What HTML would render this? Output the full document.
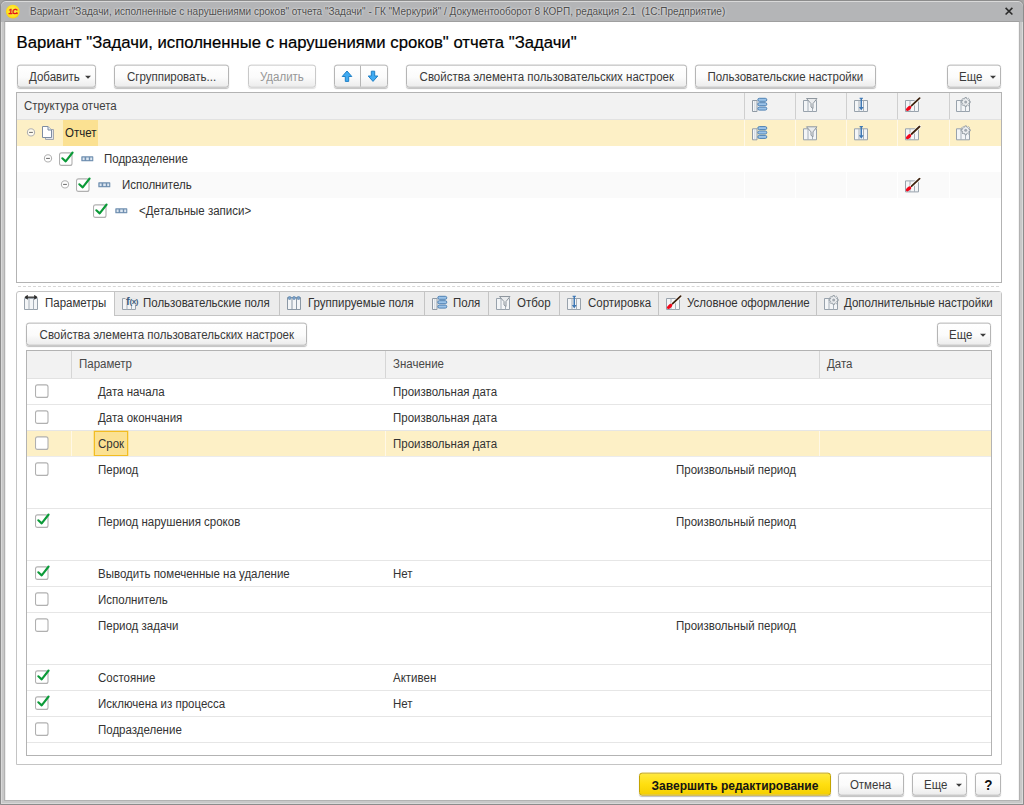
<!DOCTYPE html>
<html lang="ru"><head><meta charset="utf-8">
<title>Вариант отчета</title>
<style>
*{box-sizing:border-box;margin:0;padding:0}
html,body{width:1024px;height:805px;overflow:hidden;background:#a4a4a4}
body{font-family:"Liberation Sans",Arial,sans-serif;font-size:12px;color:#333;position:relative}
.abs{position:absolute}
#frame{position:absolute;left:0;top:0;width:1024px;height:805px;background:#c8c8c8;border:1px solid #8c8c8c;border-radius:6px 6px 0 0;box-shadow:inset 0 0 0 1px #d9d9d9}
#tbar{position:absolute;left:1px;top:2px;width:1022px;height:20px;background:#b4b5b7;border-radius:5px 5px 0 0}
#client{position:absolute;left:4px;top:21px;width:1016px;height:780px;background:#fff;border:1px solid #b2b2b2;border-top-color:#9f9f9f;box-shadow:inset 1px 0 0 #ededed,inset -1px 0 0 #f4f4f4}
#ttl{position:absolute;left:30px;top:0;height:20px;line-height:20px;font-size:11.8px;color:#4e4e4e;white-space:nowrap;transform:translateY(.7px) scaleX(.8476);transform-origin:0 50%;text-shadow:0 0 3px #e6e6e6,0 0 2px #ddd}
#h1{position:absolute;left:16.5px;top:32.5px;-webkit-text-stroke:.2px #000;font-size:16.7px;color:#000;white-space:nowrap;line-height:20px}
.btn{position:absolute;transform:translateY(-.35px);height:23px;border:1px solid #b5b5b5;border-radius:3px;background:linear-gradient(#fff,#fbfbfb 55%,#ececec);box-shadow:0 1px 1px rgba(0,0,0,.25);text-align:center;line-height:22.5px;white-space:nowrap;color:#3a3a3a}
.btn.dis{color:#979797;border-color:#c9c9c9;box-shadow:0 1px 1px rgba(0,0,0,.13)}
.btn.cr{text-align:left;padding-left:10.5px}
.btn.cr>span.x{transform-origin:0 50%}
.btn.def{background:linear-gradient(#ffe93f,#ffdf10 50%,#f5cf00);border-color:#c4a400;font-weight:bold;color:#151515}
.btn.def>span.x{transform:translateY(.9px)}
.car{position:absolute;right:4.5px;top:10px;width:0;height:0;border-left:3px solid transparent;border-right:3px solid transparent;border-top:3.5px solid #3c3c3c}
.tbl{position:absolute;border:1px solid #b3b3b3;background:#fff}
.hd{position:absolute;left:0;top:0;right:0;background:#f2f2f2;border-bottom:1px solid #e2e2e2}
.row{position:absolute;left:0;right:0}
.vl{position:absolute;width:1px}
.t{position:absolute;white-space:nowrap;line-height:14px;transform:translateY(var(--dy,.7px)) scaleX(.958);transform-origin:0 50%}
.btn>span.x{display:inline-block;transform:translateY(.75px) scaleX(.958);transform-origin:50% 50%}
.tab{position:absolute;top:292px;height:23px;border-right:1px solid #c4c4c4}
</style></head><body>
<div id="frame"></div>
<div id="tbar"></div>
<div id="client"></div>
<svg class="abs" style="left:4px;top:3px" width="18" height="18" viewBox="0 0 18 18"><defs><radialGradient id="lg" cx="50%" cy="45%" r="55%"><stop offset="0" stop-color="#fff45a"/><stop offset="0.75" stop-color="#ffe11c"/><stop offset="1" stop-color="#f5cc10"/></radialGradient></defs><circle cx="8.8" cy="8.6" r="6.9" fill="url(#lg)"/><text x="5.4" y="11" font-family="Liberation Sans" font-weight="bold" font-size="7.4" fill="#e3121b" letter-spacing="-0.4" transform="skewX(-6)" stroke="#e3121b" stroke-width="0.3">1C</text><path d="M9.3 10.6H13.8" stroke="#e3121b" stroke-width="0.9"/></svg>
<div id="ttl">Вариант "Задачи, исполненные с нарушениями сроков" отчета "Задачи" - ГК "Меркурий" / Документооборот 8 КОРП, редакция 2.1&nbsp; (1С:Предприятие)</div>
<svg class="abs" style="left:1003px;top:5px" width="12" height="12" viewBox="0 0 12 12"><path d="M2.6 2.9L9.4 9.5M9.4 2.9L2.6 9.5" stroke="#2a2a2a" stroke-width="1.6"/></svg>
<div id="h1">Вариант "Задачи, исполненные с нарушениями сроков" отчета "Задачи"</div>
<div class="btn cr" style="left:17px;top:65px;width:79px;"><span class="x">Добавить</span><i class="car"></i></div>
<div class="btn" style="left:114px;top:65px;width:115px;"><span class="x">Сгруппировать...</span></div>
<div class="btn dis" style="left:248px;top:65px;width:68px;"><span class="x">Удалить</span></div>
<div class="btn" style="left:334px;top:65px;width:54px"><div class="vl" style="left:25px;top:0;height:21px;background:#b5b5b5"></div></div>
<svg class="abs" style="left:341px;top:70px" width="12" height="13" viewBox="0 0 12 13"><path d="M6 1L10.8 6.5H7.7V11.4H4.3V6.5H1.2Z" fill="#40abf2" stroke="#2080c6" stroke-width="1" stroke-linejoin="round"/></svg>
<svg class="abs" style="left:367px;top:70px" width="12" height="13" viewBox="0 0 12 13"><path d="M6 11.4L10.8 6H7.7V1.2H4.3V6H1.2Z" fill="#40abf2" stroke="#2080c6" stroke-width="1" stroke-linejoin="round"/></svg>
<div class="btn" style="left:406px;top:65px;width:281px;"><span class="x">Свойства элемента пользовательских настроек</span></div>
<div class="btn" style="left:695px;top:65px;width:181px;"><span class="x">Пользовательские настройки</span></div>
<div class="btn cr" style="left:947px;top:65px;width:54px;"><span class="x">Еще</span><i class="car"></i></div>
<div class="tbl" style="left:16px;top:92px;width:986px;height:191px">
<div class="hd" style="height:27px"></div>
<div class="row" style="top:27px;height:26px;background:#fdf0c6"></div>
<div class="row" style="top:27px;height:26px;left:46px;width:35px;background:#fbe192"></div>
<div class="row" style="top:79px;height:26px;background:#fafafa"></div>
<div class="vl" style="left:727px;top:0;height:26px;background:#cfcfcf"></div>
<div class="vl" style="left:727px;top:27px;height:26px;background:#fff8e6"></div>
<div class="vl" style="left:727px;top:79px;height:26px;background:#fff"></div>
<div class="vl" style="left:778px;top:0;height:26px;background:#cfcfcf"></div>
<div class="vl" style="left:778px;top:27px;height:26px;background:#fff8e6"></div>
<div class="vl" style="left:778px;top:79px;height:26px;background:#fff"></div>
<div class="vl" style="left:829px;top:0;height:26px;background:#cfcfcf"></div>
<div class="vl" style="left:829px;top:27px;height:26px;background:#fff8e6"></div>
<div class="vl" style="left:829px;top:79px;height:26px;background:#fff"></div>
<div class="vl" style="left:880px;top:0;height:26px;background:#cfcfcf"></div>
<div class="vl" style="left:880px;top:27px;height:26px;background:#fff8e6"></div>
<div class="vl" style="left:880px;top:79px;height:26px;background:#fff"></div>
<div class="vl" style="left:932px;top:0;height:26px;background:#cfcfcf"></div>
<div class="vl" style="left:932px;top:27px;height:26px;background:#fff8e6"></div>
<div class="vl" style="left:932px;top:79px;height:26px;background:#fff"></div>
</div>
<div class="t" style="left:24px;top:98px;--dy:.9px;color:#404040">Структура отчета</div>
<svg class="abs" style="left:752px;top:97px" width="16" height="16" viewBox="0 0 16 16"><path d="M0.5 3.5H5V14.5H0.5Z" fill="#f6f8fa" stroke="#909aa4"/><path d="M2.8 4V14" stroke="#d0d6dc"/><rect x="5.8" y="1.3" width="9" height="3" rx="1.5" fill="#9cc3e8" stroke="#4f82b4"/><rect x="5.8" y="5.7" width="9" height="3" rx="1.5" fill="#9cc3e8" stroke="#4f82b4"/><rect x="5.8" y="10.1" width="9" height="3" rx="1.5" fill="#9cc3e8" stroke="#4f82b4"/></svg>
<svg class="abs" style="left:752px;top:125px;transform:translate(0px,0.3px)" width="16" height="16" viewBox="0 0 16 16"><path d="M0.5 3.5H5V14.5H0.5Z" fill="#f6f8fa" stroke="#909aa4"/><path d="M2.8 4V14" stroke="#d0d6dc"/><rect x="5.8" y="1.3" width="9" height="3" rx="1.5" fill="#9cc3e8" stroke="#4f82b4"/><rect x="5.8" y="5.7" width="9" height="3" rx="1.5" fill="#9cc3e8" stroke="#4f82b4"/><rect x="5.8" y="10.1" width="9" height="3" rx="1.5" fill="#9cc3e8" stroke="#4f82b4"/></svg>
<svg class="abs" style="left:803px;top:97px" width="16" height="16" viewBox="0 0 16 16"><path d="M0.5 3.5H13.5V14.5H0.5Z" fill="#f3f5f7" stroke="#98a2ac"/><path d="M5 3.5V14.5M9.5 3.5V14.5" stroke="#a7b0b9"/><path d="M3.5 1.5H14L10 6.6V11.5L8 10V6.6Z" fill="#e9ebed" stroke="#8e969e"/></svg>
<svg class="abs" style="left:803px;top:125px;transform:translate(0px,0.3px)" width="16" height="16" viewBox="0 0 16 16"><path d="M0.5 3.5H13.5V14.5H0.5Z" fill="#f3f5f7" stroke="#98a2ac"/><path d="M5 3.5V14.5M9.5 3.5V14.5" stroke="#a7b0b9"/><path d="M3.5 1.5H14L10 6.6V11.5L8 10V6.6Z" fill="#e9ebed" stroke="#8e969e"/></svg>
<svg class="abs" style="left:854px;top:97px" width="16" height="16" viewBox="0 0 16 16"><path d="M0.5 3.5H13.5V14.5H0.5Z" fill="#f3f5f7" stroke="#98a2ac"/><path d="M5 3.5V14.5M9.5 3.5V14.5" stroke="#a7b0b9"/><path d="M7.25 1V11" stroke="#3f78b4" stroke-width="1.5"/><path d="M4.9 10H9.6L7.25 13.4Z" fill="#3f78b4"/><path d="M5.6 1.3H8.9" stroke="#3f78b4" stroke-width="1.1"/></svg>
<svg class="abs" style="left:854px;top:125px;transform:translate(0px,0.3px)" width="16" height="16" viewBox="0 0 16 16"><path d="M0.5 3.5H13.5V14.5H0.5Z" fill="#f3f5f7" stroke="#98a2ac"/><path d="M5 3.5V14.5M9.5 3.5V14.5" stroke="#a7b0b9"/><path d="M7.25 1V11" stroke="#3f78b4" stroke-width="1.5"/><path d="M4.9 10H9.6L7.25 13.4Z" fill="#3f78b4"/><path d="M5.6 1.3H8.9" stroke="#3f78b4" stroke-width="1.1"/></svg>
<svg class="abs" style="left:905px;top:97px" width="16" height="16" viewBox="0 0 16 16"><path d="M0.5 3.5H13.5V14.5H0.5Z" fill="#f3f5f7" stroke="#98a2ac"/><path d="M5 3.5V14.5M9.5 3.5V14.5" stroke="#a7b0b9"/><path d="M14.6 1.2L6.6 8.7" stroke="#fff" stroke-width="3.6" stroke-linecap="round" opacity=".85"/><path d="M14.6 1.2L6.6 8.7" stroke="#3d220e" stroke-width="1.8" stroke-linecap="round"/><ellipse cx="3.6" cy="11.4" rx="3.2" ry="1.7" transform="rotate(-42 3.6 11.4)" fill="#f3061a"/></svg>
<svg class="abs" style="left:905px;top:125px;transform:translate(0px,0.3px)" width="16" height="16" viewBox="0 0 16 16"><path d="M0.5 3.5H13.5V14.5H0.5Z" fill="#f3f5f7" stroke="#98a2ac"/><path d="M5 3.5V14.5M9.5 3.5V14.5" stroke="#a7b0b9"/><path d="M14.6 1.2L6.6 8.7" stroke="#fff" stroke-width="3.6" stroke-linecap="round" opacity=".85"/><path d="M14.6 1.2L6.6 8.7" stroke="#3d220e" stroke-width="1.8" stroke-linecap="round"/><ellipse cx="3.6" cy="11.4" rx="3.2" ry="1.7" transform="rotate(-42 3.6 11.4)" fill="#f3061a"/></svg>
<svg class="abs" style="left:956px;top:97px" width="16" height="16" viewBox="0 0 16 16"><path d="M0.5 3.5H13.5V14.5H0.5Z" fill="#f3f5f7" stroke="#98a2ac"/><path d="M5 3.5V14.5M9.5 3.5V14.5" stroke="#a7b0b9"/><path d="M14.24 4.27L14.24 5.73L13.11 5.81L12.68 6.84L13.43 7.69L12.39 8.73L11.54 7.98L10.51 8.41L10.43 9.54L8.97 9.54L8.89 8.41L7.86 7.98L7.01 8.73L5.97 7.69L6.72 6.84L6.29 5.81L5.16 5.73L5.16 4.27L6.29 4.19L6.72 3.16L5.97 2.31L7.01 1.27L7.86 2.02L8.89 1.59L8.97 0.46L10.43 0.46L10.51 1.59L11.54 2.02L12.39 1.27L13.43 2.31L12.68 3.16L13.11 4.19Z" fill="#eceef0" stroke="#9098a0" stroke-width="0.9" stroke-linejoin="round"/><circle cx="9.7" cy="5" r="1.5" fill="#a2a9b0"/></svg>
<svg class="abs" style="left:956px;top:125px;transform:translate(0px,0.3px)" width="16" height="16" viewBox="0 0 16 16"><path d="M0.5 3.5H13.5V14.5H0.5Z" fill="#f3f5f7" stroke="#98a2ac"/><path d="M5 3.5V14.5M9.5 3.5V14.5" stroke="#a7b0b9"/><path d="M14.24 4.27L14.24 5.73L13.11 5.81L12.68 6.84L13.43 7.69L12.39 8.73L11.54 7.98L10.51 8.41L10.43 9.54L8.97 9.54L8.89 8.41L7.86 7.98L7.01 8.73L5.97 7.69L6.72 6.84L6.29 5.81L5.16 5.73L5.16 4.27L6.29 4.19L6.72 3.16L5.97 2.31L7.01 1.27L7.86 2.02L8.89 1.59L8.97 0.46L10.43 0.46L10.51 1.59L11.54 2.02L12.39 1.27L13.43 2.31L12.68 3.16L13.11 4.19Z" fill="#eceef0" stroke="#9098a0" stroke-width="0.9" stroke-linejoin="round"/><circle cx="9.7" cy="5" r="1.5" fill="#a2a9b0"/></svg>
<svg class="abs" style="left:905px;top:177px;transform:translate(0px,0.4px)" width="16" height="16" viewBox="0 0 16 16"><path d="M0.5 3.5H13.5V14.5H0.5Z" fill="#f3f5f7" stroke="#98a2ac"/><path d="M5 3.5V14.5M9.5 3.5V14.5" stroke="#a7b0b9"/><path d="M14.6 1.2L6.6 8.7" stroke="#fff" stroke-width="3.6" stroke-linecap="round" opacity=".85"/><path d="M14.6 1.2L6.6 8.7" stroke="#3d220e" stroke-width="1.8" stroke-linecap="round"/><ellipse cx="3.6" cy="11.4" rx="3.2" ry="1.7" transform="rotate(-42 3.6 11.4)" fill="#f3061a"/></svg>
<svg class="abs" style="left:25px;top:126px" width="12" height="12" viewBox="0 0 12 12"><circle cx="6" cy="6.4" r="3.6" fill="#fff" fill-opacity=".7" stroke="#b2b2b2" stroke-width="1.1"/><path d="M4.1 6.4H7.9" stroke="#6a6a6a" stroke-width="1"/></svg>
<svg class="abs" style="left:42px;top:126px" width="12" height="14" viewBox="0 0 12 14"><path d="M3.5 3.5H11.5V13.5H3.5Z" fill="#e4e6ea" stroke="#a4a8ae"/><path d="M0.5 0.5H6L9.5 4V11.5H0.5Z" fill="#fff" stroke="#7d8ca2"/><path d="M6 0.5V4H9.5" fill="#e8ecf2" stroke="#7d8ca2"/></svg>
<div class="t" style="left:65px;top:125px;--dy:.8px;color:#222">Отчет</div>
<svg class="abs" style="left:42px;top:152px" width="12" height="12" viewBox="0 0 12 12"><circle cx="6" cy="6.4" r="3.6" fill="#fff" fill-opacity=".7" stroke="#b2b2b2" stroke-width="1.1"/><path d="M4.1 6.4H7.9" stroke="#6a6a6a" stroke-width="1"/></svg>
<svg class="abs" style="left:59px;top:150px" width="16" height="17" viewBox="0 0 16 17"><rect x="0.5" y="2.9" width="12.5" height="12.5" rx="2" fill="#fff" stroke="#b0b0b0" stroke-width="1.1"/><path d="M3.3 8.3L6.7 11.4L13.6 2.5" fill="none" stroke="#0b9a38" stroke-width="2.1" stroke-linecap="round" stroke-linejoin="round"/></svg>
<svg class="abs" style="left:81px;top:156px" width="13" height="6" viewBox="0 0 13 6"><rect x="0.3" y="0.3" width="12" height="5" rx="0.6" fill="#6f8fb0"/><rect x="1.6" y="1.5" width="2" height="2.6" fill="#dde7f1"/><rect x="5.2" y="1.5" width="2.6" height="2.6" fill="#dde7f1"/><rect x="9.2" y="1.5" width="2" height="2.6" fill="#dde7f1"/></svg>
<div class="t" style="left:104px;top:152px;--dy:0px">Подразделение</div>
<svg class="abs" style="left:59px;top:178px" width="12" height="12" viewBox="0 0 12 12"><circle cx="6" cy="6.4" r="3.6" fill="#fff" fill-opacity=".7" stroke="#b2b2b2" stroke-width="1.1"/><path d="M4.1 6.4H7.9" stroke="#6a6a6a" stroke-width="1"/></svg>
<svg class="abs" style="left:76px;top:176px" width="16" height="17" viewBox="0 0 16 17"><rect x="0.5" y="2.9" width="12.5" height="12.5" rx="2" fill="#fff" stroke="#b0b0b0" stroke-width="1.1"/><path d="M3.3 8.3L6.7 11.4L13.6 2.5" fill="none" stroke="#0b9a38" stroke-width="2.1" stroke-linecap="round" stroke-linejoin="round"/></svg>
<svg class="abs" style="left:98px;top:182px" width="13" height="6" viewBox="0 0 13 6"><rect x="0.3" y="0.3" width="12" height="5" rx="0.6" fill="#6f8fb0"/><rect x="1.6" y="1.5" width="2" height="2.6" fill="#dde7f1"/><rect x="5.2" y="1.5" width="2.6" height="2.6" fill="#dde7f1"/><rect x="9.2" y="1.5" width="2" height="2.6" fill="#dde7f1"/></svg>
<div class="t" style="left:121.5px;top:178px;--dy:.15px">Исполнитель</div>
<svg class="abs" style="left:93px;top:202px" width="16" height="17" viewBox="0 0 16 17"><rect x="0.5" y="2.9" width="12.5" height="12.5" rx="2" fill="#fff" stroke="#b0b0b0" stroke-width="1.1"/><path d="M3.3 8.3L6.7 11.4L13.6 2.5" fill="none" stroke="#0b9a38" stroke-width="2.1" stroke-linecap="round" stroke-linejoin="round"/></svg>
<svg class="abs" style="left:115px;top:208px" width="13" height="6" viewBox="0 0 13 6"><rect x="0.3" y="0.3" width="12" height="5" rx="0.6" fill="#6f8fb0"/><rect x="1.6" y="1.5" width="2" height="2.6" fill="#dde7f1"/><rect x="5.2" y="1.5" width="2.6" height="2.6" fill="#dde7f1"/><rect x="9.2" y="1.5" width="2" height="2.6" fill="#dde7f1"/></svg>
<div class="t" style="left:138.5px;top:204px;--dy:0px">&lt;Детальные записи&gt;</div>
<div class="abs" style="left:18px;top:286px;width:981px;height:0;border-top:1px dashed #d6d6d6"></div>
<div class="abs" style="left:16px;top:291px;width:986px;height:474px;border:1px solid #c4c4c4;border-radius:3px 3px 0 0;background:#fff"></div>
<div class="abs" style="left:114px;top:292px;width:887px;height:24px;background:#ececec;border-bottom:1px solid #c4c4c4;border-left:1px solid #c4c4c4"></div>
<svg class="abs" style="left:24px;top:295px" width="16" height="16" viewBox="0 0 16 16"><path d="M0.5 3.5H13.5V14.5H0.5Z" fill="#f3f5f7" stroke="#98a2ac"/><path d="M5 3.5V14.5M9.5 3.5V14.5" stroke="#a7b0b9"/><path d="M1.5 2.2H12.5" stroke="#2c2c2c" stroke-width="1.3"/><path d="M3.8 -0.3L0.4 2.2L3.8 4.7ZM10.2 -0.3L13.6 2.2L10.2 4.7Z" fill="#2c2c2c"/></svg>
<div class="t" style="left:45px;top:295px">Параметры</div>
<div class="vl" style="left:279px;top:292px;height:23px;background:#c4c4c4"></div>
<svg class="abs" style="left:122px;top:295px" width="18" height="16" viewBox="0 0 18 16"><path d="M0.5 3.5H13.5V14.5H0.5Z" fill="#f3f5f7" stroke="#98a2ac"/><path d="M5 3.5V14.5M9.5 3.5V14.5" stroke="#a7b0b9"/><rect x="3.4" y="0" width="14" height="9.6" fill="#ececec" opacity=".9"/><text x="4" y="9.5" font-family="Liberation Sans" font-size="11" font-weight="bold" fill="#3f5f80">f</text><text x="7.6" y="9" font-family="Liberation Sans" font-size="8" font-weight="bold" fill="#3f5f80" letter-spacing="-0.5">(x)</text></svg>
<div class="t" style="left:143px;top:295px">Пользовательские поля</div>
<div class="vl" style="left:424px;top:292px;height:23px;background:#c4c4c4"></div>
<svg class="abs" style="left:287px;top:295px" width="16" height="16" viewBox="0 0 16 16"><path d="M0.5 2.5H13.5V14.5H0.5Z" fill="#f3f5f7" stroke="#8b98a5"/><path d="M5 2.5V14.5M9.5 2.5V14.5" stroke="#8b98a5"/><rect x="1.3" y="1.6" width="2.6" height="2.8" rx="0.8" fill="#7ea4cc" stroke="#567fa8" stroke-width="0.6"/><rect x="5.8" y="1.6" width="2.6" height="2.8" rx="0.8" fill="#7ea4cc" stroke="#567fa8" stroke-width="0.6"/><rect x="10.2" y="1.6" width="2.6" height="2.8" rx="0.8" fill="#7ea4cc" stroke="#567fa8" stroke-width="0.6"/></svg>
<div class="t" style="left:308px;top:295px">Группируемые поля</div>
<div class="vl" style="left:488px;top:292px;height:23px;background:#c4c4c4"></div>
<svg class="abs" style="left:432px;top:295px" width="16" height="16" viewBox="0 0 16 16"><path d="M0.5 3.5H5V14.5H0.5Z" fill="#f6f8fa" stroke="#909aa4"/><path d="M2.8 4V14" stroke="#d0d6dc"/><rect x="5.8" y="1.3" width="9" height="3" rx="1.5" fill="#9cc3e8" stroke="#4f82b4"/><rect x="5.8" y="5.7" width="9" height="3" rx="1.5" fill="#9cc3e8" stroke="#4f82b4"/><rect x="5.8" y="10.1" width="9" height="3" rx="1.5" fill="#9cc3e8" stroke="#4f82b4"/></svg>
<div class="t" style="left:453px;top:295px">Поля</div>
<div class="vl" style="left:559px;top:292px;height:23px;background:#c4c4c4"></div>
<svg class="abs" style="left:496px;top:295px" width="16" height="16" viewBox="0 0 16 16"><path d="M0.5 3.5H13.5V14.5H0.5Z" fill="#f3f5f7" stroke="#98a2ac"/><path d="M5 3.5V14.5M9.5 3.5V14.5" stroke="#a7b0b9"/><path d="M3.5 1.5H14L10 6.6V11.5L8 10V6.6Z" fill="#e9ebed" stroke="#8e969e"/></svg>
<div class="t" style="left:517px;top:295px">Отбор</div>
<div class="vl" style="left:658px;top:292px;height:23px;background:#c4c4c4"></div>
<svg class="abs" style="left:567px;top:295px" width="16" height="16" viewBox="0 0 16 16"><path d="M0.5 3.5H13.5V14.5H0.5Z" fill="#f3f5f7" stroke="#98a2ac"/><path d="M5 3.5V14.5M9.5 3.5V14.5" stroke="#a7b0b9"/><path d="M7.25 1V11" stroke="#3f78b4" stroke-width="1.5"/><path d="M4.9 10H9.6L7.25 13.4Z" fill="#3f78b4"/><path d="M5.6 1.3H8.9" stroke="#3f78b4" stroke-width="1.1"/></svg>
<div class="t" style="left:588px;top:295px">Сортировка</div>
<div class="vl" style="left:816px;top:292px;height:23px;background:#c4c4c4"></div>
<svg class="abs" style="left:666px;top:295px" width="16" height="16" viewBox="0 0 16 16"><path d="M0.5 3.5H13.5V14.5H0.5Z" fill="#f3f5f7" stroke="#98a2ac"/><path d="M5 3.5V14.5M9.5 3.5V14.5" stroke="#a7b0b9"/><path d="M14.6 1.2L6.6 8.7" stroke="#fff" stroke-width="3.6" stroke-linecap="round" opacity=".85"/><path d="M14.6 1.2L6.6 8.7" stroke="#3d220e" stroke-width="1.8" stroke-linecap="round"/><ellipse cx="3.6" cy="11.4" rx="3.2" ry="1.7" transform="rotate(-42 3.6 11.4)" fill="#f3061a"/></svg>
<div class="t" style="left:687px;top:295px">Условное оформление</div>
<svg class="abs" style="left:824px;top:295px" width="16" height="16" viewBox="0 0 16 16"><path d="M0.5 3.5H13.5V14.5H0.5Z" fill="#f3f5f7" stroke="#98a2ac"/><path d="M5 3.5V14.5M9.5 3.5V14.5" stroke="#a7b0b9"/><path d="M14.24 4.27L14.24 5.73L13.11 5.81L12.68 6.84L13.43 7.69L12.39 8.73L11.54 7.98L10.51 8.41L10.43 9.54L8.97 9.54L8.89 8.41L7.86 7.98L7.01 8.73L5.97 7.69L6.72 6.84L6.29 5.81L5.16 5.73L5.16 4.27L6.29 4.19L6.72 3.16L5.97 2.31L7.01 1.27L7.86 2.02L8.89 1.59L8.97 0.46L10.43 0.46L10.51 1.59L11.54 2.02L12.39 1.27L13.43 2.31L12.68 3.16L13.11 4.19Z" fill="#eceef0" stroke="#9098a0" stroke-width="0.9" stroke-linejoin="round"/><circle cx="9.7" cy="5" r="1.5" fill="#a2a9b0"/></svg>
<div class="t" style="left:844px;top:295px">Дополнительные настройки</div>
<div class="btn" style="left:26px;top:323px;width:281px;"><span class="x">Свойства элемента пользовательских настроек</span></div>
<div class="btn cr" style="left:937px;top:323px;width:54px;"><span class="x">Еще</span><i class="car"></i></div>
<div class="tbl" style="left:26px;top:350px;width:966px;height:406px">
<div class="hd" style="height:28px"></div>
<div class="vl" style="left:44px;top:0;height:27px;background:#d6d6d6"></div>
<div class="vl" style="left:358px;top:0;height:27px;background:#d6d6d6"></div>
<div class="vl" style="left:792px;top:0;height:27px;background:#d6d6d6"></div>
<div class="row" style="top:53px;height:1px;background:#e6e6e6"></div>
<div class="row" style="top:79px;height:1px;background:#e6e6e6"></div>
<div class="row" style="top:80px;height:25px;background:#fdf0c6"></div>
<div class="vl" style="left:44px;top:80px;height:25px;background:#fff8e6"></div>
<div class="vl" style="left:358px;top:80px;height:25px;background:#fff8e6"></div>
<div class="vl" style="left:792px;top:80px;height:25px;background:#fff8e6"></div>
<div class="abs" style="left:67px;top:80px;width:34px;height:25px;background:#fbe192;border:1px solid #f3bd22;box-shadow:0 0 0 .5px rgba(243,189,34,.55)"></div>
<div class="row" style="top:105px;height:1px;background:#ececec"></div>
<div class="row" style="top:157px;height:1px;background:#e6e6e6"></div>
<div class="row" style="top:209px;height:1px;background:#e6e6e6"></div>
<div class="row" style="top:235px;height:1px;background:#e6e6e6"></div>
<div class="row" style="top:261px;height:1px;background:#e6e6e6"></div>
<div class="row" style="top:313px;height:1px;background:#e6e6e6"></div>
<div class="row" style="top:339px;height:1px;background:#e6e6e6"></div>
<div class="row" style="top:365px;height:1px;background:#e6e6e6"></div>
<div class="row" style="top:391px;height:1px;background:#e6e6e6"></div>
</div>
<div class="t" style="left:79px;top:357px;--dy:.1px;color:#484848">Параметр</div>
<div class="t" style="left:393px;top:357px;--dy:.1px;color:#484848">Значение</div>
<div class="t" style="left:827px;top:357px;--dy:.1px;color:#484848">Дата</div>
<svg class="abs" style="left:35px;top:382px" width="16" height="17" viewBox="0 0 16 17"><rect x="0.5" y="2.9" width="12.5" height="12.5" rx="2" fill="#fff" stroke="#b0b0b0" stroke-width="1.1"/></svg>
<div class="t" style="left:98px;top:384px">Дата начала</div>
<div class="t" style="left:393px;top:384px">Произвольная дата</div>
<svg class="abs" style="left:35px;top:408px" width="16" height="17" viewBox="0 0 16 17"><rect x="0.5" y="2.9" width="12.5" height="12.5" rx="2" fill="#fff" stroke="#b0b0b0" stroke-width="1.1"/></svg>
<div class="t" style="left:98px;top:410px">Дата окончания</div>
<div class="t" style="left:393px;top:410px">Произвольная дата</div>
<svg class="abs" style="left:35px;top:434px" width="16" height="17" viewBox="0 0 16 17"><rect x="0.5" y="2.9" width="12.5" height="12.5" rx="2" fill="#fff" stroke="#b0b0b0" stroke-width="1.1"/></svg>
<div class="t" style="left:98px;top:436px">Срок</div>
<div class="t" style="left:393px;top:436px">Произвольная дата</div>
<svg class="abs" style="left:35px;top:460px" width="16" height="17" viewBox="0 0 16 17"><rect x="0.5" y="2.9" width="12.5" height="12.5" rx="2" fill="#fff" stroke="#b0b0b0" stroke-width="1.1"/></svg>
<div class="t" style="left:98px;top:462px">Период</div>
<div class="t" style="left:676px;top:462px">Произвольный период</div>
<svg class="abs" style="left:35px;top:512px" width="16" height="17" viewBox="0 0 16 17"><rect x="0.5" y="2.9" width="12.5" height="12.5" rx="2" fill="#fff" stroke="#b0b0b0" stroke-width="1.1"/><path d="M3.3 8.3L6.7 11.4L13.6 2.5" fill="none" stroke="#0b9a38" stroke-width="2.1" stroke-linecap="round" stroke-linejoin="round"/></svg>
<div class="t" style="left:98px;top:514px">Период нарушения сроков</div>
<div class="t" style="left:676px;top:514px">Произвольный период</div>
<svg class="abs" style="left:35px;top:564px" width="16" height="17" viewBox="0 0 16 17"><rect x="0.5" y="2.9" width="12.5" height="12.5" rx="2" fill="#fff" stroke="#b0b0b0" stroke-width="1.1"/><path d="M3.3 8.3L6.7 11.4L13.6 2.5" fill="none" stroke="#0b9a38" stroke-width="2.1" stroke-linecap="round" stroke-linejoin="round"/></svg>
<div class="t" style="left:98px;top:566px">Выводить помеченные на удаление</div>
<div class="t" style="left:393px;top:566px">Нет</div>
<svg class="abs" style="left:35px;top:590px" width="16" height="17" viewBox="0 0 16 17"><rect x="0.5" y="2.9" width="12.5" height="12.5" rx="2" fill="#fff" stroke="#b0b0b0" stroke-width="1.1"/></svg>
<div class="t" style="left:98px;top:592px">Исполнитель</div>
<svg class="abs" style="left:35px;top:616px" width="16" height="17" viewBox="0 0 16 17"><rect x="0.5" y="2.9" width="12.5" height="12.5" rx="2" fill="#fff" stroke="#b0b0b0" stroke-width="1.1"/></svg>
<div class="t" style="left:98px;top:618px">Период задачи</div>
<div class="t" style="left:676px;top:618px">Произвольный период</div>
<svg class="abs" style="left:35px;top:668px" width="16" height="17" viewBox="0 0 16 17"><rect x="0.5" y="2.9" width="12.5" height="12.5" rx="2" fill="#fff" stroke="#b0b0b0" stroke-width="1.1"/><path d="M3.3 8.3L6.7 11.4L13.6 2.5" fill="none" stroke="#0b9a38" stroke-width="2.1" stroke-linecap="round" stroke-linejoin="round"/></svg>
<div class="t" style="left:98px;top:670px">Состояние</div>
<div class="t" style="left:393px;top:670px">Активен</div>
<svg class="abs" style="left:35px;top:694px" width="16" height="17" viewBox="0 0 16 17"><rect x="0.5" y="2.9" width="12.5" height="12.5" rx="2" fill="#fff" stroke="#b0b0b0" stroke-width="1.1"/><path d="M3.3 8.3L6.7 11.4L13.6 2.5" fill="none" stroke="#0b9a38" stroke-width="2.1" stroke-linecap="round" stroke-linejoin="round"/></svg>
<div class="t" style="left:98px;top:696px">Исключена из процесса</div>
<div class="t" style="left:393px;top:696px">Нет</div>
<svg class="abs" style="left:35px;top:720px" width="16" height="17" viewBox="0 0 16 17"><rect x="0.5" y="2.9" width="12.5" height="12.5" rx="2" fill="#fff" stroke="#b0b0b0" stroke-width="1.1"/></svg>
<div class="t" style="left:98px;top:722px">Подразделение</div>
<div class="btn def" style="left:639px;top:773px;width:192px;"><span class="x">Завершить редактирование</span></div>
<div class="btn" style="left:838px;top:773px;width:66px;"><span class="x">Отмена</span></div>
<div class="btn cr" style="left:912px;top:773px;width:55px;"><span class="x">Еще</span><i class="car"></i></div>
<div class="btn" style="left:975px;top:773px;width:26px;font-weight:bold;color:#111;font-size:14px"><span class="x">?</span></div>
</body></html>
